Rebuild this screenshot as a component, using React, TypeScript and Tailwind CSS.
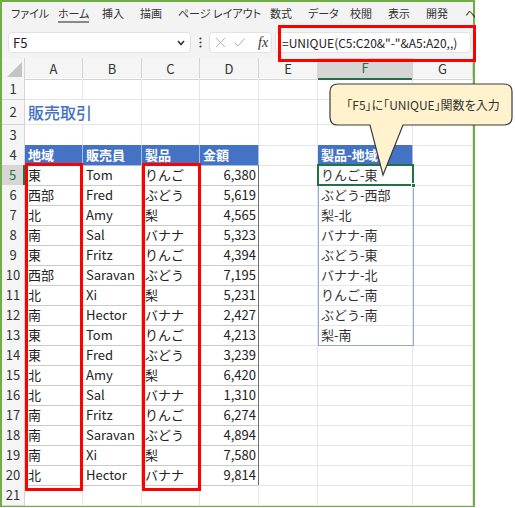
import React from 'react';

const LETTERS = ['A', 'B', 'C', 'D', 'E', 'F', 'G'];

const MENU = [
  { t: 'ファイル', w: 'w-[47px]' },
  { t: 'ホーム', w: 'w-[44px]', active: true },
  { t: '挿入', w: 'w-[38px]' },
  { t: '描画', w: 'w-[38px]' },
  { t: 'ページ レイアウト', w: 'w-[92px]' },
  { t: '数式', w: 'w-[38px]' },
  { t: 'データ', w: 'w-[42px]' },
  { t: '校閲', w: 'w-[38px]' },
  { t: '表示', w: 'w-[38px]' },
  { t: '開発', w: 'w-[39px]' },
  { t: 'ヘ', w: 'w-[10px]' },
];

const DATA: [string, string, string, string][] = [
  ['東', 'Tom', 'りんご', '6,380'],
  ['西部', 'Fred', 'ぶどう', '5,619'],
  ['北', 'Amy', '梨', '4,565'],
  ['南', 'Sal', 'バナナ', '5,323'],
  ['東', 'Fritz', 'りんご', '4,394'],
  ['西部', 'Saravan', 'ぶどう', '7,195'],
  ['北', 'Xi', '梨', '5,231'],
  ['南', 'Hector', 'バナナ', '2,427'],
  ['東', 'Tom', 'りんご', '4,213'],
  ['東', 'Fred', 'ぶどう', '3,239'],
  ['北', 'Amy', '梨', '6,420'],
  ['北', 'Sal', 'バナナ', '1,310'],
  ['南', 'Fritz', 'りんご', '6,274'],
  ['南', 'Saravan', 'ぶどう', '4,894'],
  ['南', 'Xi', '梨', '7,580'],
  ['北', 'Hector', 'バナナ', '9,814'],
];

const SPILL = ['りんご-東', 'ぶどう-西部', '梨-北', 'バナナ-南', 'ぶどう-東', 'バナナ-北', 'りんご-南', 'ぶどう-南', '梨-南'];

const HEADERS = ['地域', '販売員', '製品', '金額'];

const GRID = 'grid grid-cols-[23px_58px_59px_58px_59px_59px_95px_60px]';

function rowH(r: number) {
  if (r === 1) return 'h-[22px]';
  if (r === 2) return 'h-[25px]';
  return 'h-[20px]';
}

function Cell({ r, c }: { r: number; c: number }) {
  const plain = 'border-r border-b border-[#e6e6e6] flex items-center pl-[3px] text-[13px] text-[#222] whitespace-nowrap overflow-hidden';

  // title
  if (r === 2 && c === 0)
    return (
      <div className="border-b border-[#e6e6e6] flex items-center pl-[3px] text-[16px] font-medium text-[#4472c4] whitespace-nowrap overflow-visible z-10">
        販売取引
      </div>
    );

  // table header
  if (r === 4 && (c <= 3 || c === 5))
    return (
      <div className="border-r border-b border-[#a9bde4] bg-[#4472c4] flex items-center pl-[3px] text-[13px] font-bold text-white whitespace-nowrap overflow-hidden">
        {c === 5 ? '製品-地域' : HEADERS[c]}
      </div>
    );

  // table body
  if (r >= 5 && r <= 20 && c <= 3) {
    const v = DATA[r - 5][c];
    if (c === 3)
      return (
        <div className="border-b border-[#c9c9c9] border-r border-r-[#6f6f6f] flex items-center justify-end pr-[2px] text-[13px] text-[#222]">
          {v}
        </div>
      );
    return <div className="border-r border-b border-[#c9c9c9] flex items-center pl-[3px] text-[13px] text-[#222] whitespace-nowrap overflow-hidden">{v}</div>;
  }

  // spill
  if (c === 5 && r >= 5 && r <= 13)
    return <div className={plain + ' text-[#333]'}>{SPILL[r - 5]}</div>;

  return <div className={plain} />;
}

export default function App() {
  return (
    <div className="relative w-[515px] h-[508px] bg-white overflow-hidden font-['Noto_Sans_CJK_JP',sans-serif] text-[#222]">
      <div className="w-[475px] h-[507px] border-2 border-[#70ad47] flex flex-col">
        {/* Ribbon tabs */}
        <div className="h-[25px] bg-[#f3f3f3] flex items-center pl-[9px] pb-[2px] text-[11px] text-[#333] [font-feature-settings:'palt'] whitespace-nowrap">
          {MENU.map(m => (
            <div key={m.t} className={m.w + ' shrink-0 overflow-hidden'}>
              <span className={m.active ? 'inline-block border-b-2 border-[#8a8a8a] leading-[15px]' : 'inline-block leading-[15px]'}>{m.t}</span>
            </div>
          ))}
        </div>

        {/* Formula bar */}
        <div className="h-[31px] bg-[#f3f3f3] flex items-start pt-[5px]">
          <div className="ml-[6px] w-[183px] h-[21px] bg-white border border-[#e2e2e2] rounded-[4px] flex items-center justify-between pl-[4px] pr-[5px]">
            <span className="text-[13px] text-[#222]">F5</span>
            <svg width="8" height="6" viewBox="0 0 8 6">
              <polyline points="1,1 4,4.5 7,1" fill="none" stroke="#333" strokeWidth="1.6" />
            </svg>
          </div>
          <div className="w-[18px] h-[21px] flex items-center justify-center">
            <svg width="3" height="11" viewBox="0 0 3 11">
              <circle cx="1.5" cy="1.5" r="1.1" fill="#444" />
              <circle cx="1.5" cy="5.5" r="1.1" fill="#444" />
              <circle cx="1.5" cy="9.5" r="1.1" fill="#444" />
            </svg>
          </div>
          <div className="w-[63px] h-[21px] bg-white border border-[#e2e2e2] rounded-[4px] flex items-center pl-[5px]">
            <svg width="11" height="11" viewBox="0 0 11 11">
              <path d="M1 1 L10 10 M10 1 L1 10" stroke="#b5b5b5" strokeWidth="1" />
            </svg>
            <svg className="ml-[8px]" width="11" height="9" viewBox="0 0 11 9">
              <polyline points="0.5,4.5 4,8 10.5,0.5" fill="none" stroke="#b5b5b5" strokeWidth="1" />
            </svg>
            <span className="ml-[13px] font-['Liberation_Serif',serif] italic text-[14px] text-[#333] leading-none">fx</span>
          </div>
          <div className="ml-[3px] w-[196px] h-[21px] bg-white border border-[#e2e2e2] rounded-[4px] flex items-center pl-[6px] text-[12px] text-[#222] whitespace-nowrap overflow-hidden">
            =UNIQUE(C5:C20&amp;"-"&amp;A5:A20,,)
          </div>
        </div>

        {/* Column headers */}
        <div className={GRID + ' h-[20px] bg-[#f5f5f5]'}>
          <div className="border-r border-b border-[#d4d4d4] flex items-end justify-end pr-[2px] pb-[2px]">
            <svg width="15" height="15" viewBox="0 0 15 15">
              <polygon points="15,0 15,15 0,15" fill="#c4c4c4" />
            </svg>
          </div>
          {LETTERS.map((l, i) =>
            i === 5 ? (
              <div key={l} className="bg-[#d6d6d6] border-r border-[#d4d4d4] border-b-2 border-b-[#217346] flex items-center justify-center text-[13px] text-[#217346]">
                {l}
              </div>
            ) : (
              <div key={l} className="border-r border-b border-[#d4d4d4] flex items-center justify-center text-[13px] text-[#333]">
                {l}
              </div>
            ),
          )}
        </div>

        {/* Rows */}
        {Array.from({ length: 21 }, (_, k) => k + 1).map(r => (
          <div key={r} className={GRID + ' ' + rowH(r)}>
            {r === 5 ? (
              <div className="bg-[#d6d6d6] border-b border-[#d4d4d4] border-r-2 border-r-[#217346] flex items-center justify-center text-[13px] text-[#217346]">
                {r}
              </div>
            ) : (
              <div className="bg-[#f5f5f5] border-r border-b border-[#d4d4d4] flex items-center justify-center text-[13px] text-[#333]">
                {r}
              </div>
            )}
            {LETTERS.map((l, c) => (r === 2 && c === 1 ? <div key={l} className="border-r border-b border-[#e6e6e6]" /> : <Cell key={l} r={r} c={c} />))}
          </div>
        ))}
      </div>

      {/* Spill range and active cell */}
      <div className="absolute left-[318px] top-[164px] w-[96px] h-[182px] border border-[#8eaadb] pointer-events-none" />
      <div className="absolute left-[317px] top-[164px] w-[97px] h-[22px] border-2 border-[#217346] pointer-events-none">
        <div className="absolute right-[-4px] bottom-[-4px] w-[5px] h-[5px] bg-[#217346] border border-white" />
      </div>

      {/* Red highlights */}
      <div className="absolute left-[25px] top-[163px] w-[58px] h-[328px] border-[3px] border-[#ff0000]" />
      <div className="absolute left-[142px] top-[163px] w-[59px] h-[328px] border-[3px] border-[#ff0000]" />
      <div className="absolute left-[278px] top-[25px] w-[198px] h-[37px] border-[3px] border-[#ff0000]" />

      {/* Callout */}
      <svg className="absolute left-[328px] top-[82px]" width="187" height="96" viewBox="0 0 187 96">
        <path
          d="M10 2 H176 Q184 2 184 10 V35 Q184 43 176 43 H75 L55 93 L42 43 H10 Q2 43 2 35 V10 Q2 2 10 2 Z"
          fill="#fff2cc"
          stroke="#3a3a3a"
          strokeWidth="1.2"
        />
      </svg>
      <div className="absolute left-[332px] top-[84px] w-[182px] h-[41px] flex items-center justify-center text-[12px] text-[#333] [font-feature-settings:'palt'] whitespace-nowrap">
        「F5」に「UNIQUE」関数を入力
      </div>
    </div>
  );
}
